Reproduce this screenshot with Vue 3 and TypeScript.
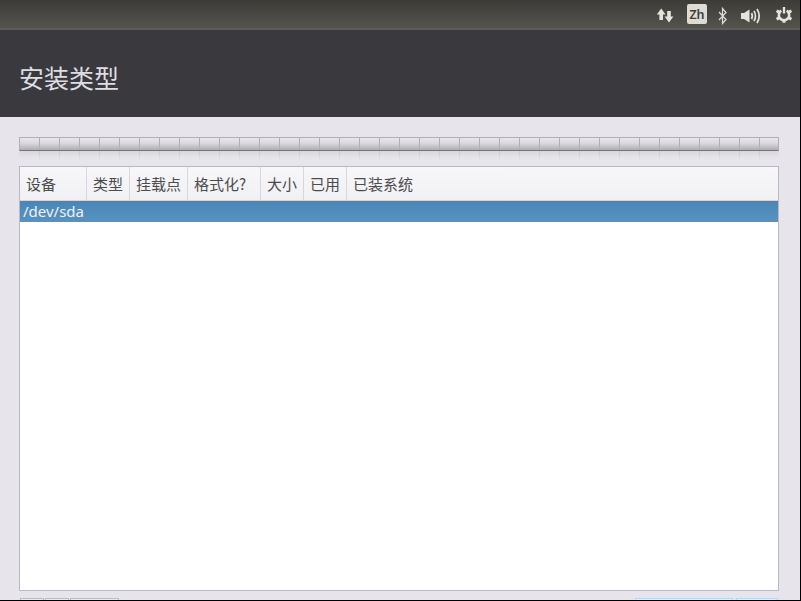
<script setup lang="ts">
const columns: { label: string; width: number }[] = [
  { label: '设备', width: 67 },
  { label: '类型', width: 43 },
  { label: '挂载点', width: 58 },
  { label: '格式化?', width: 73 },
  { label: '大小', width: 43 },
  { label: '已用', width: 43 },
  { label: '已装系统', width: 431 },
]
const segments = Array.from({ length: 38 }, (_, i) => i)
const leftButtons = [24, 24, 49]
const rightButtons = [98, 42]
</script>

<template>
  <div class="screen">
    <div class="viewport">
      <header class="panel">
        <div class="indicators">
          <svg class="ind net" width="18" height="28" viewBox="0 0 18 28">
            <path d="M4.2 8.5 L8.6 14.5 H6 V20 H2.4 V14.5 H-0.2 Z" fill="#e6e3dc" />
            <path d="M12 22.5 L7.6 16.5 H10.2 V11 H13.8 V16.5 H16.4 Z" fill="#e6e3dc" />
          </svg>
          <div class="lang">Zh</div>
          <svg class="ind bt" width="10" height="28" viewBox="0 0 10 28">
            <path d="M1 12 L8 19.5 L4.5 23.5 V8.5 L8 12.5 L1 20" fill="none" stroke="#dcd9d2" stroke-width="1.3" />
          </svg>
          <svg class="ind vol" width="21" height="28" viewBox="0 0 21 28">
            <path d="M0 13 H3 L8.5 9.5 V22.5 L3 19 H0 Z" fill="#e6e3dc" />
            <path d="M10.5 13 Q12.2 16 10.5 19 M13 10.8 Q16 16 13 21.2 M16 9 Q20.4 16 16 23" fill="none" stroke="#e6e3dc" stroke-width="1.7" />
          </svg>
          <svg class="ind power" width="17" height="28" viewBox="0 0 17 28">
            <path d="M5.3 10.6 A5.2 5.2 0 1 0 10.7 10.6" fill="none" stroke="#e6e3dc" stroke-width="2.6" />
            <path d="M8 7 V13.5" fill="none" stroke="#e6e3dc" stroke-width="2.4" />
            <path d="M12.5 12.4 L15.4 10.8 M12.5 17.6 L15.4 19.2 M8 20 V22.8 M3.5 12.4 L0.6 10.8 M3.5 17.6 L0.6 19.2" fill="none" stroke="#e6e3dc" stroke-width="3" />
          </svg>
        </div>
      </header>
      <div class="title-band">
        <h1 class="title">安装类型</h1>
      </div>
      <main class="content">
        <div class="partition-bar">
          <div class="segments">
            <span v-for="s in segments" :key="s" class="segment"></span>
          </div>
          <div class="reflection">
            <span v-for="s in segments" :key="s" class="tick"></span>
          </div>
        </div>
        <div class="table">
          <div class="thead">
            <div
              v-for="c in columns"
              :key="c.label"
              class="th"
              :style="{ width: c.width + 'px' }"
            >{{ c.label }}</div>
          </div>
          <div class="row">/dev/sda</div>
        </div>
        <div class="buttons">
          <div class="group">
            <span v-for="(w, i) in leftButtons" :key="i" class="btn" :style="{ width: w + 'px' }"></span>
          </div>
          <div class="group right">
            <span v-for="(w, i) in rightButtons" :key="i" class="btn primary" :style="{ width: w + 'px' }"></span>
          </div>
        </div>
      </main>
    </div>
  </div>
</template>

<style>
html, body { margin: 0; background: #000; }
</style>

<style scoped>
.screen {
  width: 801px;
  height: 601px;
  background: #000;
  overflow: hidden;
  font-family: "Noto Sans CJK SC", "Liberation Sans", sans-serif;
}
.viewport {
  width: 800px;
  height: 600px;
  background: #e7e5eb;
  overflow: hidden;
}
.panel {
  height: 28px;
  background: linear-gradient(#3c3b37, #55534d);
  border-bottom: 2px solid #5d5c56;
  display: flex;
  justify-content: flex-end;
}
.indicators {
  display: flex;
  align-items: center;
  height: 28px;
  padding-right: 7px;
}
.ind { display: block; flex: none; }
.net { margin-right: 12px; overflow: visible; }
.lang {
  width: 20px;
  height: 20px;
  background: #dedbd4;
  border-radius: 2px;
  color: #3f3e3a;
  font: 600 12.5px/21px "Noto Sans", sans-serif;
  text-align: center;
  margin-right: 11px;
}
.bt { margin-right: 13px; }
.vol { margin-right: 14px; overflow: visible; }
.power { overflow: visible; }
.title-band {
  height: 87px;
  background: #3a393e;
  display: flex;
  align-items: center;
  padding-left: 20px;
}
.title {
  margin: 6px 0 0 -1px;
  font-size: 25px;
  font-weight: 400;
  line-height: 32px;
  color: #dedde4;
}
.content {
  padding: 20px 21px 0 19px;
}
.partition-bar {
  height: 29px;
}
.segments {
  height: 14px;
  display: flex;
  border: 1px solid #b2b0b6;
  border-bottom: 1px solid #77767b;
  box-sizing: border-box;
  width: 760px;
  overflow: hidden;
  background: linear-gradient(#e8e7eb, #d9d8dc 45%, #adacb1);
}
.segment {
  flex: none;
  width: 20px;
  height: 100%;
  box-sizing: border-box;
  border-right: 1px solid #b0afb4;
}
.reflection {
  height: 9px;
  width: 760px;
  box-sizing: border-box;
  padding-left: 1px;
  display: flex;
  overflow: hidden;
  background: linear-gradient(#d8d7dc, #e7e5eb 80%);
}
.tick {
  flex: none;
  width: 20px;
  box-sizing: border-box;
  border-right: 1px solid;
  border-image: linear-gradient(#c6c5ca, #e7e5eb) 1;
}
.table {
  width: 760px;
  height: 425px;
  box-sizing: border-box;
  border: 1px solid #bab8c2;
  background: #fff;
}
.thead {
  height: 34px;
  display: flex;
  box-sizing: border-box;
  background: linear-gradient(#f7f6f9, #f1f0f4);
  border-bottom: 1px solid #d5d4da;
}
.th {
  flex: none;
  box-sizing: border-box;
  padding-left: 6px;
  border-right: 1px solid #d8d7dc;
  font-size: 15px;
  line-height: 33px;
  color: #4c4c4c;
  white-space: nowrap;
}
.th:last-child { border-right: 0; }
.row {
  height: 21px;
  background: linear-gradient(#4a86b5, #5593c2);
  color: #f1f1f4;
  font: 15px/21px "Noto Sans", sans-serif;
  padding-left: 3px;
}
.buttons {
  display: flex;
  justify-content: space-between;
  margin-top: 7px;
  padding: 0 1px;
}
.group { display: flex; gap: 1px; }
.group.right { gap: 3px; }
.btn {
  height: 4px;
  box-sizing: border-box;
  display: block;
  border: 1px solid #bdbbc4;
  border-bottom: 0;
  background: #eceaf0;
}
.btn.primary { border-color: #b5d8f2; }
</style>
